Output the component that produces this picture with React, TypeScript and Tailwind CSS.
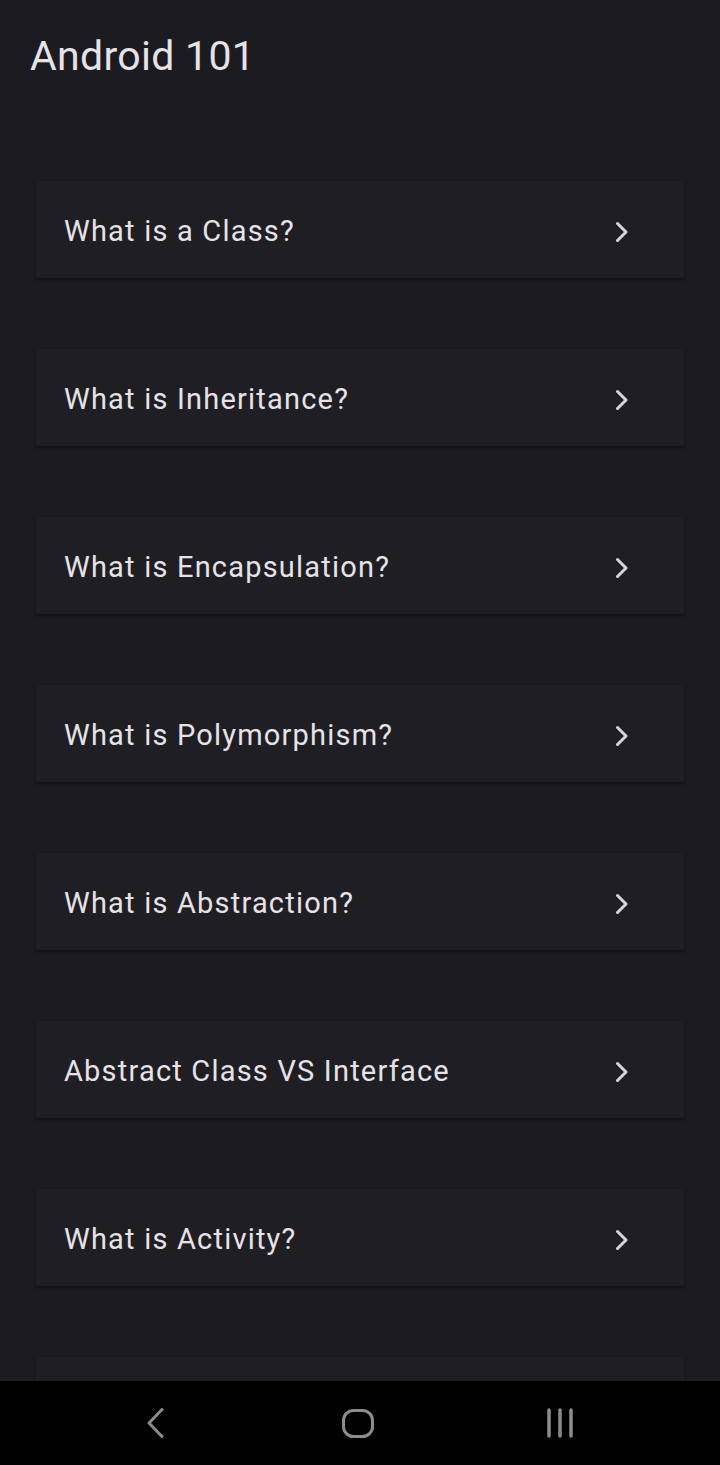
import React from 'react';

const topics = [
  'What is a Class?',
  'What is Inheritance?',
  'What is Encapsulation?',
  'What is Polymorphism?',
  'What is Abstraction?',
  'Abstract Class VS Interface',
  'What is Activity?',
];

function Chevron() {
  return (
    <svg width="14" height="22" viewBox="0 0 14 22" fill="none" className="shrink-0">
      <polyline
        points="2.5,2.5 11,11 2.5,19.5"
        stroke="#d9d5df"
        strokeWidth="3"
        strokeLinecap="round"
        strokeLinejoin="round"
      />
    </svg>
  );
}

function TopicCard({ title }: { title?: string }) {
  return (
    <div className="h-[97px] shrink-0 flex items-center justify-between pl-[28px] pr-[55px] pt-[4px] bg-[#1f1e23] shadow-[0_2px_3px_rgba(0,0,0,0.35)]">
      {title && (
        <>
          <span className="text-[29px] text-[#e6e2e8] tracking-[1.2px]">{title}</span>
          <Chevron />
        </>
      )}
    </div>
  );
}

export default function App() {
  return (
    <div
      className="w-[720px] h-[1465px] flex flex-col bg-[#1c1b20] overflow-hidden"
      style={{ fontFamily: 'Roboto, "Noto Sans", sans-serif' }}
    >
      <div className="flex-1 overflow-hidden">
        {/* Toolbar title */}
        <div className="h-[112px] pl-[30px] pt-[30px]">
          <h1 className="text-[41px] leading-[52px] text-[#e6e2e8] tracking-[0.3px]">Android 101</h1>
        </div>

        {/* Topic list; the next card is partly hidden behind the nav bar */}
        <div className="flex flex-col gap-[71px] px-[36px] pt-[69px]">
          {topics.map((t) => (
            <TopicCard key={t} title={t} />
          ))}
          <TopicCard />
        </div>
      </div>

      {/* System navigation bar */}
      <div className="h-[84px] shrink-0 bg-black flex items-center pl-[146px]">
        <svg width="20" height="30" viewBox="0 0 20 30" fill="none">
          <polyline
            points="16,1.5 3,15 16,28.5"
            stroke="#8c8c8c"
            strokeWidth="3"
            strokeLinecap="round"
            strokeLinejoin="round"
          />
        </svg>
        <svg width="32" height="29" viewBox="0 0 32 29" fill="none" className="ml-[176px]">
          <rect x="1.5" y="1.5" width="29" height="26" rx="10" stroke="#8c8c8c" strokeWidth="3" />
        </svg>
        <svg width="28" height="30" viewBox="0 0 28 30" fill="none" className="ml-[172px]">
          <line x1="3" y1="2" x2="3" y2="28" stroke="#8c8c8c" strokeWidth="3.5" strokeLinecap="round" />
          <line x1="14" y1="2" x2="14" y2="28" stroke="#8c8c8c" strokeWidth="3.5" strokeLinecap="round" />
          <line x1="25" y1="2" x2="25" y2="28" stroke="#8c8c8c" strokeWidth="3.5" strokeLinecap="round" />
        </svg>
      </div>
    </div>
  );
}
